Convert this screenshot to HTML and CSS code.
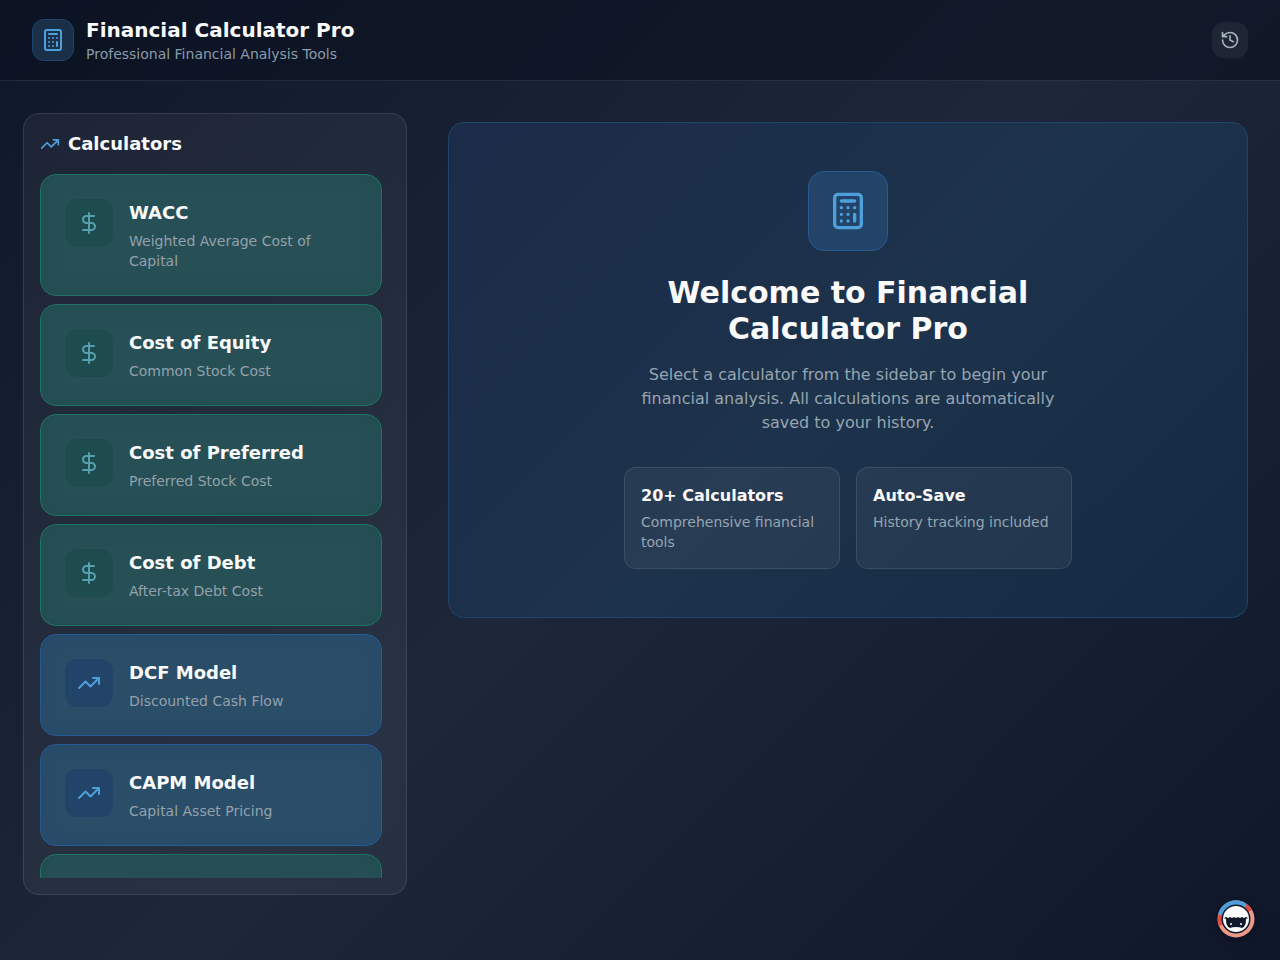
FILE: index.html
```html
<!DOCTYPE html>
<html lang="en">
<head>
  <meta charset="UTF-8">
  <meta name="viewport" content="width=device-width, initial-scale=1.0">
  <title>Financial Calculator Pro</title>
  <link rel="stylesheet" href="styles.css">
</head>
<body>
  <svg class="sprite" aria-hidden="true">
    <symbol id="calculator" viewBox="0 0 24 24">
      <rect width="16" height="20" x="4" y="2" rx="2"/>
      <path d="M8 6h8M16 14v4M16 10h.01M12 10h.01M8 10h.01M12 14h.01M8 14h.01M12 18h.01M8 18h.01"/>
    </symbol>
    <symbol id="trending" viewBox="0 0 24 24">
      <path d="M22 7l-8.5 8.5-5-5L2 17M16 7h6v6"/>
    </symbol>
    <symbol id="dollar" viewBox="0 0 24 24">
      <path d="M12 2v20M17 5H9.5a3.5 3.5 0 0 0 0 7h5a3.5 3.5 0 0 1 0 7H6"/>
    </symbol>
    <symbol id="history" viewBox="0 0 24 24">
      <path d="M3 12a9 9 0 1 0 9-9 9.75 9.75 0 0 0-6.74 2.74L3 8M3 3v5h5M12 7v5l4 2"/>
    </symbol>
  </svg>

  <header class="header">
    <div class="brand">
      <div class="brand-icon"><svg class="icon icon-lg"><use href="#calculator"/></svg></div>
      <div>
        <h1>Financial Calculator Pro</h1>
        <p>Professional Financial Analysis Tools</p>
      </div>
    </div>
    <button class="history-btn" type="button" aria-label="History"><svg class="icon"><use href="#history"/></svg></button>
  </header>

  <div class="layout">
    <aside class="sidebar">
      <h2><svg class="icon"><use href="#trending"/></svg>Calculators</h2>
      <nav class="calc-list">
        <button class="calc green" type="button">
          <span class="calc-icon"><svg class="icon icon-lg"><use href="#dollar"/></svg></span>
          <span class="calc-text"><strong>WACC</strong><span>Weighted Average Cost of Capital</span></span>
        </button>
        <button class="calc green" type="button">
          <span class="calc-icon"><svg class="icon icon-lg"><use href="#dollar"/></svg></span>
          <span class="calc-text"><strong>Cost of Equity</strong><span>Common Stock Cost</span></span>
        </button>
        <button class="calc green" type="button">
          <span class="calc-icon"><svg class="icon icon-lg"><use href="#dollar"/></svg></span>
          <span class="calc-text"><strong>Cost of Preferred</strong><span>Preferred Stock Cost</span></span>
        </button>
        <button class="calc green" type="button">
          <span class="calc-icon"><svg class="icon icon-lg"><use href="#dollar"/></svg></span>
          <span class="calc-text"><strong>Cost of Debt</strong><span>After-tax Debt Cost</span></span>
        </button>
        <button class="calc blue" type="button">
          <span class="calc-icon"><svg class="icon icon-lg"><use href="#trending"/></svg></span>
          <span class="calc-text"><strong>DCF Model</strong><span>Discounted Cash Flow</span></span>
        </button>
        <button class="calc blue" type="button">
          <span class="calc-icon"><svg class="icon icon-lg"><use href="#trending"/></svg></span>
          <span class="calc-text"><strong>CAPM Model</strong><span>Capital Asset Pricing</span></span>
        </button>
        <div class="calc green calc-empty"></div>
      </nav>
    </aside>

    <main class="content">
      <section class="welcome">
        <div class="welcome-inner">
          <div class="welcome-icon"><svg class="icon icon-xl"><use href="#calculator"/></svg></div>
          <h2>Welcome to Financial Calculator Pro</h2>
          <p>Select a calculator from the sidebar to begin your financial analysis. All calculations are automatically saved to your history.</p>
          <div class="features">
            <div class="feature">
              <h3>20+ Calculators</h3>
              <p>Comprehensive financial tools</p>
            </div>
            <div class="feature">
              <h3>Auto-Save</h3>
              <p>History tracking included</p>
            </div>
          </div>
        </div>
      </section>
    </main>
  </div>

  <button class="assistant" type="button" aria-label="Assistant">
    <svg viewBox="0 0 38 38">
      <circle cx="19" cy="19" r="18.5" fill="#ee9988"/>
      <path d="M19 19L2 26A18.500 18.500 0 0 1 2 14z" fill="#dd4b3e"/>
      <path d="M19 19L1 14A18.500 18.500 0 0 1 30 4z" fill="#4f9fdc"/>
      <path d="M19 19L30 4A18.500 18.500 0 0 1 35 10z" fill="#dd4b3e"/>
      <circle cx="19" cy="19" r="14.5" fill="#101a2c"/>
      <circle cx="19" cy="19" r="13" fill="#fafafa"/>
      <path d="M7 18l2-1 2 1 2-1 2 1 2-1 2 1 2-1 2 1 2-1 2 1 2-1 2 1-2 1q0 8-4 9-2-1-6-1t-6 1q-4-1-4-9z" fill="#101a2c"/>
      <circle cx="14" cy="24" r="1" fill="#fafafa"/>
      <circle cx="24" cy="24" r="1" fill="#fafafa"/>
    </svg>
  </button>
</body>
</html>
```
FILE: styles.css
```css
* {
  box-sizing: border-box;
}
body {
  margin: 0;
  min-height: 100vh;
  font-family: "DejaVu Sans", sans-serif;
  font-size: 16px;
  line-height: 24px;
  color: #fafafa;
  background: linear-gradient(135deg, #0f172a, #1e2739 50%, #0f172a);
}
h1, h2, h3, p {
  margin: 0;
}
button {
  font: inherit;
  color: inherit;
  cursor: pointer;
}
.sprite {
  display: none;
}
.icon {
  width: 20px;
  height: 20px;
  flex: none;
  fill: none;
  stroke: currentColor;
  stroke-width: 2;
  stroke-linecap: round;
  stroke-linejoin: round;
}
.icon-lg {
  width: 24px;
  height: 24px;
}
.icon-xl {
  width: 40px;
  height: 40px;
}

/* header */
.header {
  display: flex;
  align-items: center;
  justify-content: space-between;
  padding: 16px 32px;
  background: rgba(10, 17, 32, 0.6);
  border-bottom: 1px solid rgba(255, 255, 255, 0.1);
}
.brand {
  display: flex;
  align-items: center;
  gap: 12px;
}
.brand-icon {
  display: flex;
  align-items: center;
  justify-content: center;
  width: 42px;
  height: 42px;
  border: 1px solid #20446a;
  border-radius: 12px;
  background: #1a3049;
  color: #4f9fdc;
}
.brand h1 {
  font-size: 20px;
  line-height: 28px;
}
.brand p {
  font-size: 14px;
  line-height: 20px;
  color: #8a9ba8;
}
.history-btn {
  display: flex;
  align-items: center;
  justify-content: center;
  width: 36px;
  height: 36px;
  padding: 0;
  border: 0;
  border-radius: 12px;
  background: rgba(255, 255, 255, 0.06);
  color: #a3b3b8;
}

/* layout */
.layout {
  display: grid;
  grid-template-columns: 384px 1fr;
  gap: 41px;
  align-items: start;
  padding: 32px 32px 32px 23px;
}
.sidebar {
  display: flex;
  flex-direction: column;
  gap: 16px;
  height: calc(100vh - 178px);
  padding: 16px;
  border: 1px solid rgba(255, 255, 255, 0.1);
  border-radius: 16px;
  background: rgba(255, 255, 255, 0.05);
}
.sidebar h2 {
  display: flex;
  align-items: center;
  gap: 8px;
  font-size: 18px;
  line-height: 28px;
}
.sidebar h2 .icon {
  color: #4f9fdc;
}
.calc-list {
  flex: 1;
  display: flex;
  flex-direction: column;
  gap: 8px;
  min-height: 0;
  padding-right: 8px;
  overflow-y: auto;
  scrollbar-width: none;
}
.calc {
  flex: none;
  display: flex;
  align-items: flex-start;
  gap: 16px;
  padding: 24px;
  border: 1px solid;
  border-radius: 16px;
  text-align: left;
}
.green {
  border-color: #1d7463;
  background: #275056;
  box-shadow: inset 0 0 20px rgba(20, 70, 70, 0.4);
}
.blue {
  border-color: #255a96;
  background: #2a4d68;
  box-shadow: inset 0 0 20px rgba(30, 70, 110, 0.4);
}
.calc-icon {
  flex: none;
  display: flex;
  align-items: center;
  justify-content: center;
  width: 48px;
  height: 48px;
  border-radius: 12px;
}
.green .calc-icon {
  background: #1e4b4e;
  color: #559fae;
}
.blue .calc-icon {
  background: #214468;
  color: #4f9fdc;
}
.calc-text strong {
  display: block;
  margin-bottom: 4px;
  font-size: 18px;
  line-height: 28px;
}
.calc-text span {
  display: block;
  font-size: 14px;
  line-height: 20px;
  color: #94a1ab;
}
.calc-empty {
  height: 102px;
}

/* welcome panel */
.content {
  padding-top: 9px;
}
.welcome {
  padding: 48px;
  border: 1px solid #20446a;
  border-radius: 16px;
  background: linear-gradient(135deg, #1b2b49, #1d324b 50%, #142a42);
  text-align: center;
}
.welcome-inner {
  max-width: 448px;
  margin: 0 auto;
}
.welcome-icon {
  display: flex;
  align-items: center;
  justify-content: center;
  width: 80px;
  height: 80px;
  margin: 0 auto 24px;
  border: 1px solid #285a92;
  border-radius: 16px;
  background: #214468;
  color: #4f9fdc;
}
.welcome h2 {
  margin-bottom: 16px;
  font-size: 30px;
  line-height: 36px;
}
.welcome p {
  color: #96a5b0;
}
.features {
  display: grid;
  grid-template-columns: 1fr 1fr;
  gap: 16px;
  margin-top: 32px;
  text-align: left;
}
.feature {
  padding: 16px;
  border: 1px solid rgba(255, 255, 255, 0.1);
  border-radius: 12px;
  background: rgba(255, 255, 255, 0.05);
}
.feature h3 {
  margin-bottom: 4px;
  font-size: 16px;
  line-height: 24px;
}
.feature p {
  font-size: 14px;
  line-height: 20px;
}

/* floating button */
.assistant {
  position: fixed;
  right: 25px;
  bottom: 22px;
  width: 38px;
  height: 38px;
  padding: 0;
  border: 0;
  border-radius: 50%;
  background: none;
  box-shadow: 0 2px 10px rgba(0, 0, 0, 0.4);
}
.assistant svg {
  display: block;
}
```
